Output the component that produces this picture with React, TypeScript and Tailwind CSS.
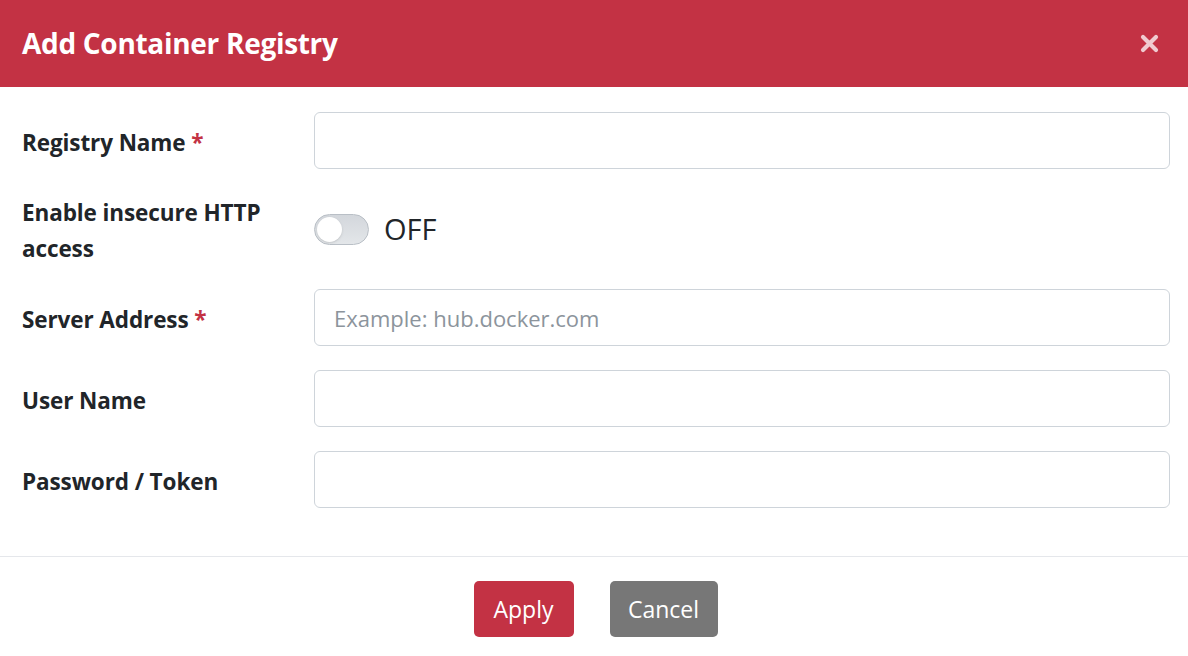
import React from 'react';

const Label: React.FC<{ text: string; required?: boolean }> = ({ text, required }) => (
  <div className="w-[292px] shrink-0 translate-y-[2px] pr-4 text-[22.5px] font-bold leading-[36px] tracking-[-0.1px] text-[#212529]">
    {text}
    {required && <span className="text-[#c33244]"> *</span>}
  </div>
);

const TextInput: React.FC<{ placeholder?: string }> = ({ placeholder }) => (
  <input
    type="text"
    placeholder={placeholder}
    className="h-[57px] flex-1 rounded-[6px] border border-[#ced4da] bg-white px-[19px] text-[22px] text-[#212529] outline-none placeholder:text-[#8c949c]"
  />
);

export default function App() {
  return (
    <div className="flex h-[656px] w-full flex-col bg-white font-['Open_Sans',sans-serif]">
      {/* Header */}
      <div className="flex h-[87px] shrink-0 items-center justify-between bg-[#c33244] pl-[22px] pr-[29px]">
        <h1 className="-translate-y-[1px] text-[28px] font-bold tracking-[-0.3px] text-white">Add Container Registry</h1>
        <button className="text-white/75">
          <svg width="19" height="19" viewBox="0 0 19 19">
            <path d="M3 3 L16 16 M16 3 L3 16" stroke="currentColor" strokeWidth="4.2" strokeLinecap="round" />
          </svg>
        </button>
      </div>

      {/* Body */}
      <div className="flex flex-col gap-[24px] border-b border-[#e5e7eb] pl-[22px] pr-[18px] pt-[25px] pb-[48px]">
        <div className="flex items-center">
          <Label text="Registry Name" required />
          <TextInput />
        </div>

        <div className="flex items-center">
          <Label text="Enable insecure HTTP access" />
          <div className="flex items-center gap-[15px]">
            <div className="relative h-[31px] w-[55px] rounded-full border border-[#b9bfc6] bg-gradient-to-b from-[#d3d7dc] to-[#e3e6e9]">
              <div className="absolute left-[2px] top-[2px] h-[25px] w-[25px] rounded-full bg-white shadow-sm" />
            </div>
            <span className="text-[29px] text-[#212529]">OFF</span>
          </div>
        </div>

        <div className="flex items-center">
          <Label text="Server Address" required />
          <TextInput placeholder="Example: hub.docker.com" />
        </div>

        <div className="flex items-center">
          <Label text="User Name" />
          <TextInput />
        </div>

        <div className="flex items-center">
          <Label text="Password / Token" />
          <TextInput />
        </div>
      </div>

      {/* Footer */}
      <div className="flex justify-center gap-[36px] pl-[3px] pt-[24px]">
        <button className="h-[56px] w-[100px] rounded-[5px] bg-[#c33244] text-[23px] text-white">Apply</button>
        <button className="h-[56px] w-[108px] rounded-[5px] bg-[#777777] text-[23px] text-white">Cancel</button>
      </div>
    </div>
  );
}
